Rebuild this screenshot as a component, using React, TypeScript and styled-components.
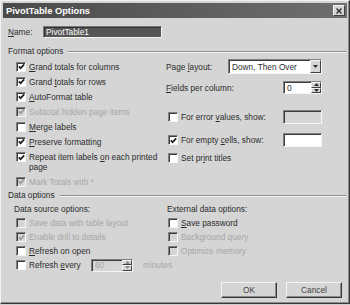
import styled, { createGlobalStyle } from "styled-components";
import type { ReactNode } from "react";

const GlobalStyle = createGlobalStyle`
  body {
    margin: 0;
    padding: 0;
    background: #cfcfcf;
  }
`;

const Window = styled.div`
  box-sizing: border-box;
  width: 350px;
  height: 304px;
  padding: 2px;
  background: #d5d5d5;
  border: 1px solid;
  border-color: #f2f2f2 #383838 #383838 #f2f2f2;
  box-shadow: inset -1px -1px 0 #8a8a8a;
  font-family: "Liberation Sans", Arial, sans-serif;
  font-size: 8.3px;
  color: #2c2c2c;
  display: flex;
  flex-direction: column;
`;

const TitleBar = styled.div`
  height: 15px;
  flex: none;
  display: flex;
  align-items: center;
  justify-content: space-between;
  padding: 0 2px 0 3px;
  background: linear-gradient(90deg, #4a4a4a, #6e6e6e);
  color: #ffffff;
  font-weight: bold;
  font-size: 9.3px;
`;

const CloseButton = styled.div`
  box-sizing: border-box;
  width: 12px;
  height: 11px;
  display: flex;
  align-items: center;
  justify-content: center;
  background: #d5d5d5;
  border: 1px solid;
  border-color: #f4f4f4 #404040 #404040 #f4f4f4;
`;

const Body = styled.div`
  flex: 1;
  display: flex;
  flex-direction: column;
  padding: 0 1px 0 5px;
`;

const NameRow = styled.div`
  display: flex;
  align-items: center;
  height: 12px;
  margin-top: 8px;
`;

const Label = styled.span<{ $width?: number; $disabled?: boolean; $gap?: number }>`
  white-space: nowrap;
  line-height: 10px;
  color: ${(p) => (p.$disabled ? "#a6a6a6" : "#2c2c2c")};
  margin-left: ${(p) => p.$gap ?? 0}px;
  ${(p) => (p.$width ? `width: ${p.$width}px; flex: none;` : "")}
`;

const Acc = styled.span`
  text-decoration: underline;
`;

const NameInput = styled.div`
  box-sizing: border-box;
  width: 119px;
  height: 12px;
  display: flex;
  align-items: center;
  padding-left: 2px;
  background: #565656;
  border: 1px solid;
  border-color: #7a7a7a #f4f4f4 #f4f4f4 #7a7a7a;
  box-shadow: inset 1px 1px 0 #303030;
  color: #ffffff;
`;

const GroupHeader = styled.div<{ $top: number }>`
  display: flex;
  align-items: center;
  height: 11px;
  margin-top: ${(p) => p.$top}px;
  white-space: nowrap;

  &::after {
    content: "";
    flex: 1;
    margin: 2px 0 0 5px;
    border-top: 1px solid #8e8e8e;
    border-bottom: 1px solid #f4f4f4;
  }
`;

const Columns = styled.div<{ $top: number }>`
  display: grid;
  grid-template-columns: 150px 156px;
  align-items: start;
  margin: ${(p) => p.$top}px 0 0 8px;
`;

const Column = styled.div`
  display: flex;
  flex-direction: column;
`;

const Row = styled.div<{ $h: number; $top?: number; $indent?: number }>`
  display: flex;
  align-items: center;
  height: ${(p) => p.$h}px;
  margin-top: ${(p) => p.$top ?? 0}px;
  padding-left: ${(p) => p.$indent ?? 0}px;
`;

const SplitRow = styled(Row)`
  justify-content: space-between;
`;

const TallRow = styled.div`
  display: flex;
  align-items: flex-start;
  height: 25px;
  padding-top: 3px;
  box-sizing: border-box;
`;

const SubHeader = styled.div<{ $shift: number }>`
  display: flex;
  align-items: center;
  height: 14px;
  margin-left: ${(p) => p.$shift}px;
  white-space: nowrap;
`;

const Box = styled.span<{ $disabled?: boolean }>`
  box-sizing: border-box;
  flex: none;
  width: 10px;
  height: 10px;
  margin-right: 3px;
  display: flex;
  align-items: center;
  justify-content: center;
  background: ${(p) => (p.$disabled ? "#d5d5d5" : "#ffffff")};
  border: 1px solid;
  border-color: #808080 #f6f6f6 #f6f6f6 #808080;
  box-shadow: inset 1px 1px 0 #3c3c3c;
`;

const Sunken = styled.div<{ $w: number; $h: number; $bg: string }>`
  box-sizing: border-box;
  width: ${(p) => p.$w}px;
  height: ${(p) => p.$h}px;
  flex: none;
  display: flex;
  align-items: stretch;
  background: ${(p) => p.$bg};
  border: 1px solid;
  border-color: #808080 #f6f6f6 #f6f6f6 #808080;
  box-shadow: inset 1px 1px 0 #3c3c3c;
`;

const FieldText = styled.span<{ $disabled?: boolean }>`
  flex: 1;
  display: flex;
  align-items: center;
  padding-left: 3px;
  color: ${(p) => (p.$disabled ? "#a6a6a6" : "#2c2c2c")};
  white-space: nowrap;
`;

const ArrowButton = styled.span`
  box-sizing: border-box;
  width: 11px;
  display: flex;
  align-items: center;
  justify-content: center;
  background: #d5d5d5;
  border: 1px solid;
  border-color: #f4f4f4 #404040 #404040 #f4f4f4;
`;

const SpinButtons = styled.span`
  width: 10px;
  display: flex;
  flex-direction: column;
`;

const SpinHalf = styled(ArrowButton)`
  width: 10px;
  flex: 1;
`;

const ButtonRow = styled.div`
  display: flex;
  justify-content: flex-end;
  gap: 9px;
  margin: 10px 4px 0 0;
`;

const Button = styled.button`
  box-sizing: border-box;
  width: 56px;
  height: 16px;
  padding: 0;
  background: #d5d5d5;
  border: 1px solid;
  border-color: #f4f4f4 #383838 #383838 #f4f4f4;
  box-shadow: inset -1px -1px 0 #8a8a8a;
  font-family: inherit;
  font-size: 8.3px;
  color: #444444;
`;

const Triangle = ({ up, color = "#2c2c2c" }: { up?: boolean; color?: string }) => (
  <svg width="5" height="3" viewBox="0 0 5 3">
    <polygon points={up ? "0,3 5,3 2.5,0" : "0,0 5,0 2.5,3"} fill={color} />
  </svg>
);

const Check = ({ checked, disabled }: { checked?: boolean; disabled?: boolean }) => (
  <Box $disabled={disabled}>
    {checked && (
      <svg width="7" height="7" viewBox="0 0 7 7">
        <polyline
          points="0.8,3.4 2.6,5.2 6.2,1.4"
          fill="none"
          stroke={disabled ? "#9a9a9a" : "#1e1e1e"}
          strokeWidth="1.7"
        />
      </svg>
    )}
  </Box>
);

type OptionProps = {
  children: ReactNode;
  checked?: boolean;
  disabled?: boolean;
  h?: number;
  indent?: number;
};

const Option = ({ children, checked, disabled, h = 15, indent = 0 }: OptionProps) => (
  <Row $h={h} $indent={indent}>
    <Check checked={checked} disabled={disabled} />
    <Label $disabled={disabled}>{children}</Label>
  </Row>
);

const Spinner = ({ value, w, h, disabled }: { value: string; w: number; h: number; disabled?: boolean }) => (
  <Sunken $w={w} $h={h} $bg={disabled ? "#d5d5d5" : "#ffffff"}>
    <FieldText $disabled={disabled}>{value}</FieldText>
    <SpinButtons>
      <SpinHalf>
        <Triangle up color={disabled ? "#8a8a8a" : "#2c2c2c"} />
      </SpinHalf>
      <SpinHalf>
        <Triangle color={disabled ? "#8a8a8a" : "#2c2c2c"} />
      </SpinHalf>
    </SpinButtons>
  </Sunken>
);

export default function App() {
  return (
    <>
      <GlobalStyle />
      <Window>
        <TitleBar>
          <span>PivotTable Options</span>
          <CloseButton>
            <svg width="6" height="6" viewBox="0 0 6 6">
              <path d="M0.5 0.5 L5.5 5.5 M5.5 0.5 L0.5 5.5" stroke="#2c2c2c" strokeWidth="1.4" />
            </svg>
          </CloseButton>
        </TitleBar>
        <Body>
          <NameRow>
            <Label $width={35}>
              <Acc>N</Acc>ame:
            </Label>
            <NameInput>PivotTable1</NameInput>
          </NameRow>

          <GroupHeader $top={7}>Format options</GroupHeader>
          <Columns $top={3}>
            <Column>
              <Option checked>
                <Acc>G</Acc>rand totals for columns
              </Option>
              <Option checked>
                Grand <Acc>t</Acc>otals for rows
              </Option>
              <Option checked>
                <Acc>A</Acc>utoFormat table
              </Option>
              <Option checked disabled>
                Subtotal hidden page items
              </Option>
              <Option>
                <Acc>M</Acc>erge labels
              </Option>
              <Option checked>
                <Acc>P</Acc>reserve formatting
              </Option>
              <TallRow>
                <Check checked />
                <Label>
                  Repeat item labels <Acc>o</Acc>n each printed
                  <br />
                  page
                </Label>
              </TallRow>
              <Option checked disabled>
                Mark Totals with *
              </Option>
            </Column>
            <Column>
              <SplitRow $h={15}>
                <Label>
                  Page <Acc>l</Acc>ayout:
                </Label>
                <Sunken $w={94} $h={15} $bg="#ffffff">
                  <FieldText>Down, Then Over</FieldText>
                  <ArrowButton>
                    <Triangle />
                  </ArrowButton>
                </Sunken>
              </SplitRow>
              <SplitRow $h={13} $top={7}>
                <Label>
                  <Acc>F</Acc>ields per column:
                </Label>
                <Spinner value="0" w={39} h={13} />
              </SplitRow>
              <SplitRow $h={14} $top={16} $indent={2}>
                <Row $h={14}>
                  <Check />
                  <Label>
                    For error <Acc>v</Acc>alues, show:
                  </Label>
                </Row>
                <Sunken $w={39} $h={14} $bg="#d5d5d5" />
              </SplitRow>
              <SplitRow $h={14} $top={9} $indent={2}>
                <Row $h={14}>
                  <Check checked />
                  <Label>
                    For empty <Acc>c</Acc>ells, show:
                  </Label>
                </Row>
                <Sunken $w={39} $h={14} $bg="#ffffff" />
              </SplitRow>
              <Row $h={15} $top={3} $indent={2}>
                <Check />
                <Label>
                  Set pr<Acc>i</Acc>nt titles
                </Label>
              </Row>
            </Column>
          </Columns>

          <GroupHeader $top={0}>Data options</GroupHeader>
          <Columns $top={2}>
            <Column>
              <SubHeader $shift={-2}>Data source options:</SubHeader>
              <Option h={14} disabled>
                Save data with table layout
              </Option>
              <Option h={14} checked disabled>
                Enable drill to details
              </Option>
              <Option h={14}>
                <Acc>R</Acc>efresh on open
              </Option>
              <Row $h={14}>
                <Check />
                <Label $width={62}>
                  Refresh <Acc>e</Acc>very
                </Label>
                <Spinner value="60" w={42} h={13} disabled />
                <Label $disabled $gap={10}>
                  minutes
                </Label>
              </Row>
            </Column>
            <Column>
              <SubHeader $shift={1}>External data options:</SubHeader>
              <Option h={14} indent={2}>
                <Acc>S</Acc>ave password
              </Option>
              <Option h={14} indent={2} disabled>
                Background query
              </Option>
              <Option h={14} indent={2} disabled>
                Optimize memory
              </Option>
            </Column>
          </Columns>

          <ButtonRow>
            <Button>OK</Button>
            <Button>Cancel</Button>
          </ButtonRow>
        </Body>
      </Window>
    </>
  );
}
